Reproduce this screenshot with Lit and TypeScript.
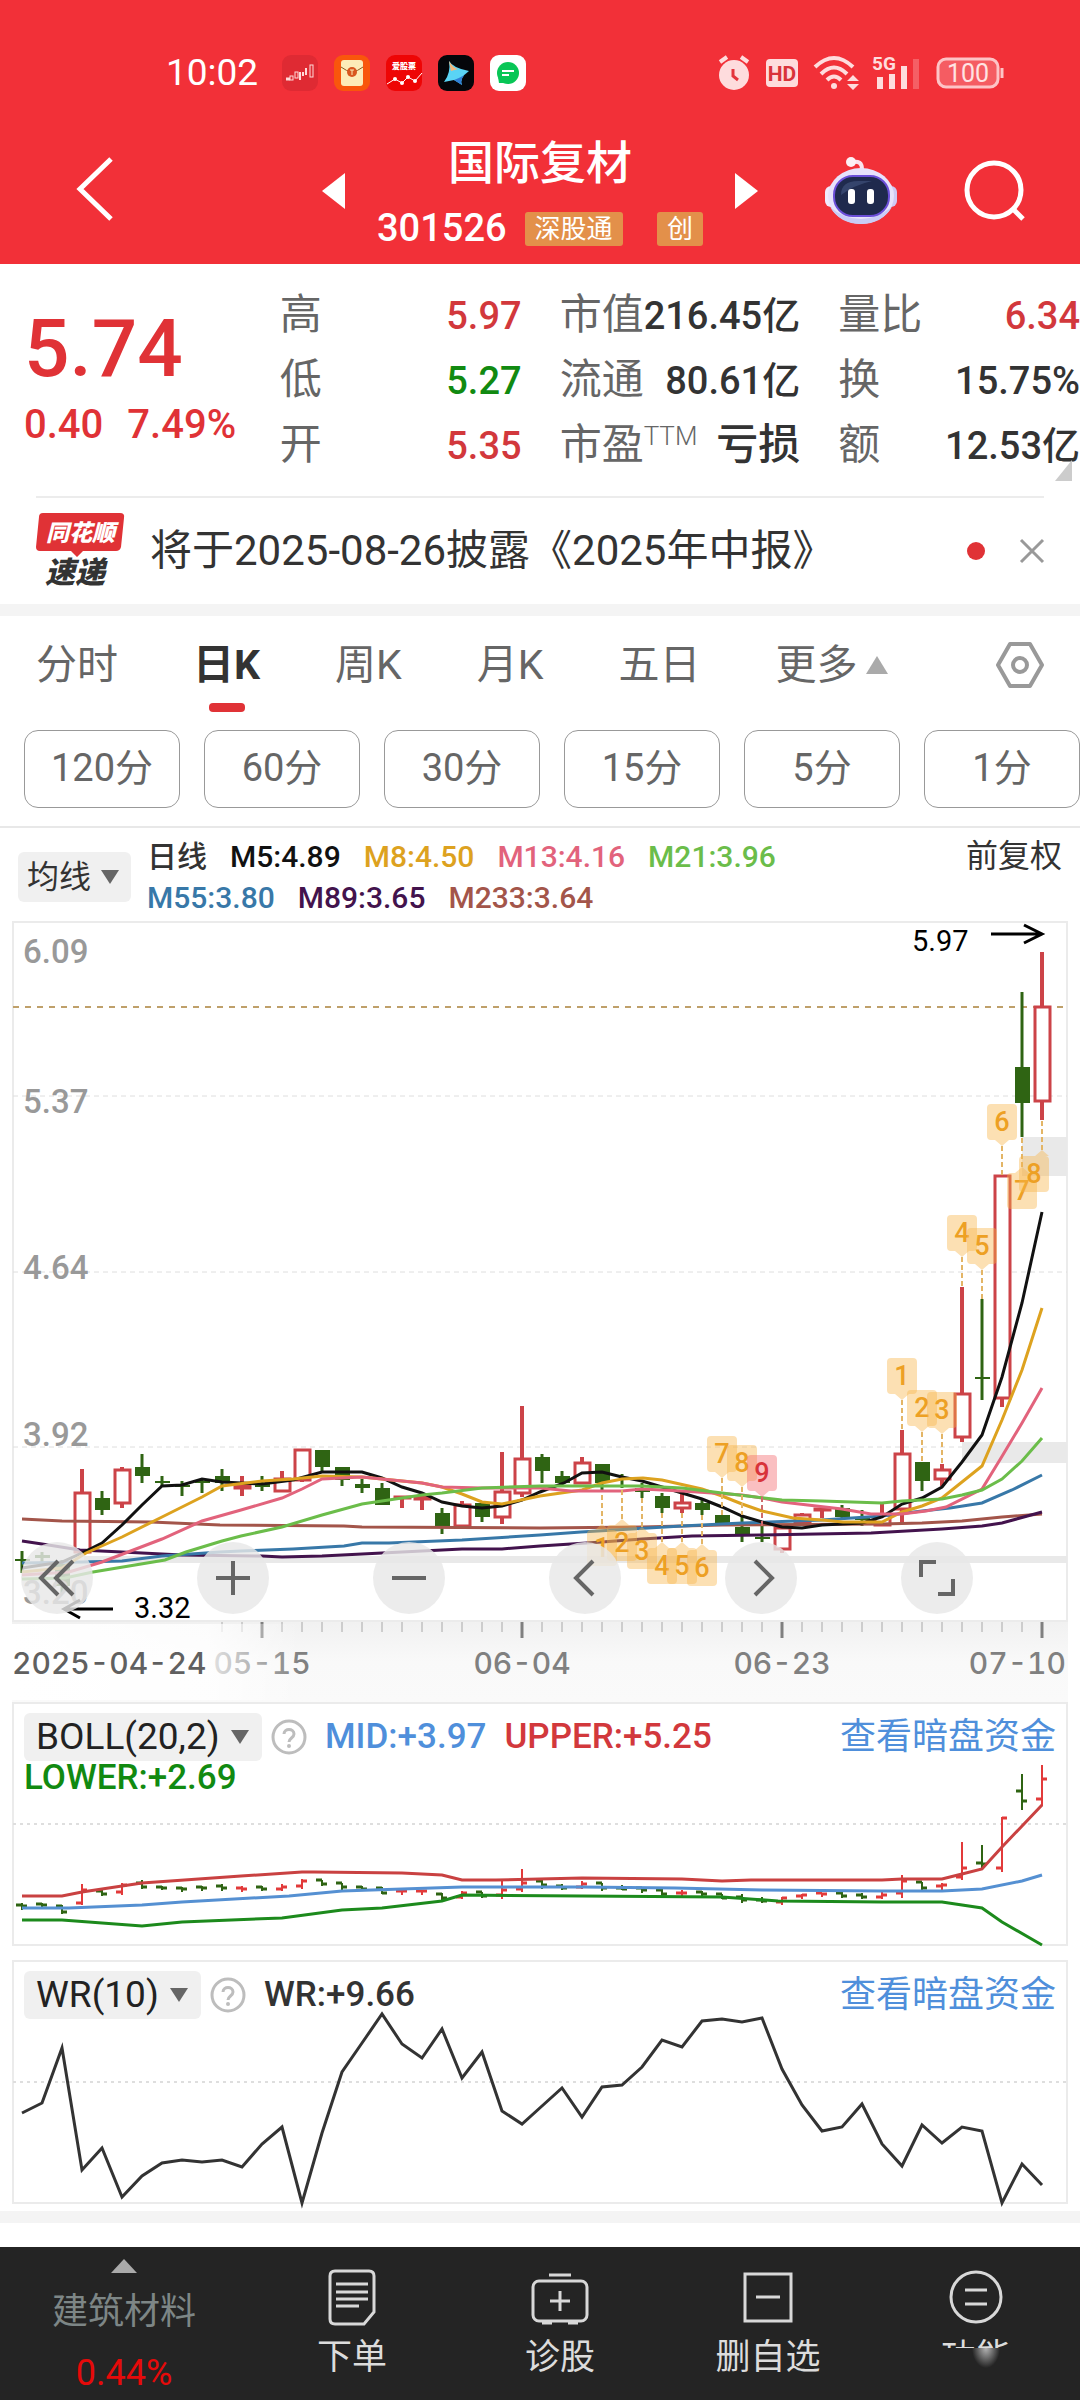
import { LitElement, html, svg, css } from "lit";
import { customElement, state } from "lit/decorators.js";

type Candle = { up: boolean; top: number; bottom: number; high: number; low: number };
type Point = [number, number];

const r = (top: number, bottom: number, high: number, low: number): Candle => ({ up: true, top, bottom, high, low });
const g = (top: number, bottom: number, high: number, low: number): Candle => ({ up: false, top, bottom, high, low });

const candles: Candle[] = [
  g(1559, 1561, 1551, 1573), g(1555, 1558, 1552, 1562), g(1564, 1586, 1560, 1593), r(1493, 1552, 1469, 1553),
  g(1498, 1510, 1491, 1515), r(1470, 1503, 1467, 1508), g(1467, 1476, 1454, 1483), g(1481, 1483, 1476, 1487),
  g(1485, 1487, 1481, 1496), g(1481, 1483, 1478, 1493), g(1476, 1483, 1469, 1491), r(1485, 1488, 1476, 1496),
  g(1483, 1487, 1476, 1491), r(1479, 1491, 1471, 1491), r(1450, 1480, 1449, 1482), g(1450, 1467, 1450, 1471),
  g(1467, 1480, 1467, 1486), g(1484, 1488, 1479, 1493), g(1488, 1505, 1483, 1505), r(1497, 1498, 1496, 1508),
  r(1497, 1499, 1495, 1510), g(1513, 1526, 1508, 1534), r(1505, 1526, 1501, 1526), g(1503, 1517, 1503, 1522),
  r(1492, 1517, 1452, 1524), r(1459, 1493, 1406, 1497), g(1457, 1471, 1454, 1483), g(1476, 1483, 1471, 1485),
  r(1463, 1483, 1457, 1483), g(1464, 1483, 1464, 1492), g(1485, 1487, 1474, 1488), g(1488, 1492, 1483, 1498),
  g(1496, 1508, 1493, 1513), r(1503, 1508, 1494, 1513), g(1503, 1510, 1498, 1515), g(1515, 1524, 1515, 1524),
  g(1527, 1536, 1515, 1542), g(1537, 1539, 1526, 1542), r(1528, 1549, 1528, 1553), r(1515, 1523, 1513, 1524),
  r(1509, 1510, 1507, 1518), g(1508, 1517, 1505, 1520), g(1518, 1520, 1510, 1526), r(1515, 1525, 1504, 1526),
  r(1454, 1509, 1430, 1523), g(1462, 1481, 1462, 1491), r(1470, 1479, 1464, 1486), r(1394, 1437, 1287, 1442),
  g(1377, 1379, 1299, 1400), r(1176, 1398, 1176, 1407), g(1067, 1103, 992, 1137), r(1007, 1101, 952, 1120),
];

const averages: { color: string; points: Point[] }[] = [
  { color: "#a3554a", points: [[22, 1519], [62, 1521], [151, 1522], [220, 1525], [344, 1526], [362, 1527], [540, 1528], [642, 1527], [722, 1525], [882, 1524], [922, 1523], [962, 1521], [1002, 1517], [1042, 1514]] },
  { color: "#43134d", points: [[22, 1541], [42, 1544], [80, 1550], [122, 1552], [182, 1555], [262, 1556], [282, 1557], [322, 1556], [382, 1553], [462, 1549], [502, 1549], [540, 1546], [602, 1542], [642, 1539], [692, 1536], [760, 1535], [871, 1533], [942, 1529], [982, 1526], [1002, 1523], [1042, 1512]] },
  { color: "#3878a8", points: [[22, 1563], [82, 1562], [122, 1561], [162, 1556], [220, 1552], [241, 1551], [293, 1549], [344, 1546], [362, 1543], [389, 1543], [462, 1540], [540, 1535], [581, 1532], [682, 1526], [742, 1523], [822, 1520], [882, 1516], [922, 1511], [950, 1508], [982, 1503], [1012, 1490], [1042, 1475]] },
  { color: "#111111", points: [[22, 1568], [62, 1562], [84, 1552], [102, 1543], [122, 1525], [142, 1505], [162, 1486], [182, 1485], [202, 1479], [222, 1482], [262, 1484], [293, 1480], [322, 1472], [362, 1472], [382, 1478], [402, 1487], [422, 1493], [442, 1502], [462, 1506], [482, 1508], [502, 1506], [522, 1500], [540, 1492], [564, 1483], [582, 1473], [602, 1472], [622, 1477], [642, 1481], [662, 1487], [682, 1493], [702, 1499], [722, 1507], [742, 1516], [762, 1522], [782, 1527], [802, 1528], [822, 1525], [862, 1523], [882, 1517], [902, 1504], [922, 1498], [942, 1487], [962, 1462], [982, 1435], [1002, 1377], [1022, 1303], [1042, 1212]] },
  { color: "#dda21f", points: [[22, 1572], [62, 1568], [86, 1553], [122, 1537], [162, 1517], [202, 1497], [222, 1486], [262, 1481], [293, 1479], [322, 1476], [362, 1477], [382, 1479], [422, 1483], [442, 1487], [462, 1494], [482, 1502], [502, 1504], [540, 1496], [582, 1490], [602, 1483], [622, 1479], [643, 1478], [662, 1480], [702, 1489], [722, 1496], [742, 1504], [762, 1511], [793, 1518], [822, 1520], [843, 1522], [882, 1522], [902, 1512], [922, 1506], [942, 1498], [962, 1482], [982, 1466], [1002, 1420], [1022, 1370], [1042, 1308]] },
  { color: "#e2637c", points: [[22, 1575], [69, 1572], [102, 1562], [162, 1539], [202, 1521], [241, 1510], [282, 1498], [302, 1489], [322, 1479], [362, 1477], [422, 1483], [442, 1487], [482, 1488], [540, 1488], [571, 1491], [622, 1491], [642, 1489], [682, 1491], [742, 1495], [762, 1498], [782, 1502], [842, 1509], [871, 1514], [902, 1514], [926, 1511], [946, 1507], [982, 1489], [1001, 1458], [1022, 1423], [1042, 1388]] },
  { color: "#6bbd4a", points: [[22, 1579], [65, 1578], [93, 1572], [165, 1560], [186, 1552], [222, 1541], [241, 1536], [282, 1527], [322, 1515], [362, 1504], [422, 1495], [442, 1493], [482, 1488], [540, 1486], [642, 1486], [682, 1488], [722, 1493], [782, 1500], [822, 1501], [882, 1503], [902, 1501], [942, 1499], [962, 1495], [982, 1490], [1002, 1479], [1022, 1461], [1042, 1438]] },
];

const bands: { color: string; points: Point[] }[] = [
  { color: "#c94141", points: [[22, 1896], [62, 1896], [82, 1892], [142, 1883], [241, 1876], [302, 1872], [314, 1872], [402, 1873], [442, 1875], [462, 1880], [496, 1880], [582, 1878], [682, 1879], [722, 1881], [751, 1880], [882, 1880], [902, 1879], [942, 1879], [962, 1874], [982, 1869], [1002, 1847], [1042, 1805]] },
  { color: "#5590d2", points: [[22, 1908], [69, 1908], [142, 1905], [182, 1902], [289, 1896], [342, 1891], [462, 1887], [582, 1887], [675, 1888], [762, 1890], [882, 1891], [942, 1891], [982, 1889], [1022, 1881], [1042, 1875]] },
  { color: "#1c8a1c", points: [[22, 1920], [62, 1920], [142, 1926], [182, 1922], [282, 1918], [342, 1910], [382, 1908], [442, 1901], [462, 1895], [582, 1896], [722, 1897], [778, 1901], [882, 1902], [942, 1902], [982, 1908], [1002, 1922], [1042, 1945]] },
];

const wr: number[] = [
  488, 458, 295, 660, 595, 740, 678, 638, 630, 637, 630, 650, 582, 532, 760, 550, 367, 280, 193, 283, 323, 237, 383,
  305, 483, 522, 468, 415, 500, 412, 405, 350, 270, 292, 213, 207, 217, 205, 358, 465, 542, 532, 463, 583, 647, 525,
  580, 532, 542, 760, 642, 705,
];

/* Sequence markers: digit, anchor x, box x, box top, end of the dotted leader, marker above the bar or below it. */
const marks: { n: number; x: number; bx: number; y: number; to: number; above: boolean; hot?: boolean }[] = [
  { n: 1, x: 602, bx: 602, y: 1530, to: 1492, above: false },
  { n: 2, x: 622, bx: 622, y: 1525, to: 1490, above: false },
  { n: 3, x: 642, bx: 642, y: 1533, to: 1498, above: false },
  { n: 4, x: 662, bx: 662, y: 1548, to: 1513, above: false },
  { n: 5, x: 682, bx: 682, y: 1548, to: 1513, above: false },
  { n: 6, x: 702, bx: 702, y: 1550, to: 1515, above: false },
  { n: 7, x: 722, bx: 722, y: 1436, to: 1515, above: true },
  { n: 8, x: 742, bx: 742, y: 1445, to: 1515, above: true },
  { n: 9, x: 762, bx: 762, y: 1455, to: 1526, above: true, hot: true },
  { n: 1, x: 902, bx: 902, y: 1358, to: 1430, above: true },
  { n: 2, x: 922, bx: 922, y: 1390, to: 1462, above: true },
  { n: 3, x: 942, bx: 942, y: 1392, to: 1464, above: true },
  { n: 4, x: 962, bx: 962, y: 1215, to: 1287, above: true },
  { n: 5, x: 982, bx: 982, y: 1228, to: 1299, above: true },
  { n: 6, x: 1002, bx: 1002, y: 1104, to: 1176, above: true },
  { n: 7, x: 1022, bx: 1022, y: 1173, to: 1137, above: false },
  { n: 8, x: 1042, bx: 1034, y: 1156, to: 1120, above: false },
];

const cx = (i: number) => 22 + 20 * i;
const poly = (pts: Point[]) => pts.map((p) => p.join(",")).join(" ");

const downTriangle = html`<svg class="tri" width="18" height="14" viewBox="0 0 18 14" aria-hidden="true"><path d="M0 0H18L9 14Z" fill="#666" /></svg>`;
const help = html`<svg width="36" height="36" viewBox="0 0 36 36" aria-hidden="true">
  <circle cx="18" cy="18" r="16" fill="none" stroke="#bdbdbd" stroke-width="3" />
  <path d="M13 15c0-6 10-6 10 0 0 4-5 4-5 8" fill="none" stroke="#bdbdbd" stroke-width="3" />
  <circle cx="18" cy="27" r="2" fill="#bdbdbd" />
</svg>`;

@customElement("app-root")
export class AppRoot extends LitElement {
  @state() private tab = "日K";

  static styles = css`
    :host {
      display: block;
      background: #fff;
      color: #333;
      font-family: Roboto, "Noto Sans CJK SC", sans-serif;
      line-height: 1.2;
      overflow-x: hidden;
    }
    * { box-sizing: border-box; }
    svg { display: block; flex: none; overflow: visible; }
    button, select {
      font: inherit;
      color: inherit;
      background: none;
      border: 0;
      padding: 0;
      margin: 0;
      appearance: none;
    }
    a { color: inherit; text-decoration: none; }
    h1 { margin: 0; }

    .top { background: #f23038; color: #fff; height: 264px; }
    .status {
      display: flex;
      align-items: center;
      height: 98px;
      padding: 48px 76px 0 166px;
      font-size: 37px;
      line-height: 50px;
    }
    .apps { display: flex; gap: 16px; margin-left: 24px; }
    .signals { display: flex; align-items: center; gap: 16px; margin-left: auto; }
    .title-bar {
      display: grid;
      grid-template-columns: 1fr auto 1fr;
      align-items: center;
      height: 166px;
      padding-top: 20px;
    }
    .back { padding-left: 76px; }
    .stock { display: flex; align-items: center; gap: 32px; }
    .names { width: 326px; }
    .names h1 { font-size: 46px; line-height: 76px; font-weight: 500; text-align: center; }
    .code { display: flex; align-items: center; height: 56px; font-size: 38px; font-weight: 500; }
    .tag {
      background: #e3904a;
      border-radius: 3px;
      font-size: 26px;
      font-weight: 400;
      line-height: 34px;
      padding: 0 10px;
      margin-left: 18px;
    }
    .tag.board { margin-left: auto; }
    .tools { display: flex; align-items: center; gap: 66px; padding-left: 66px; }

    .quote {
      position: relative;
      display: grid;
      grid-template-columns: 218fr 242fr 240fr 242fr;
      column-gap: 38px;
      padding: 18px 0 19px 24px;
      font-size: 38px;
      font-weight: 500;
      white-space: nowrap;
    }
    .price { color: #e03236; padding-top: 25px; }
    .last { font-size: 80px; line-height: 84px; }
    .change { display: flex; gap: 24px; font-size: 40px; line-height: 68px; }
    .row { display: flex; justify-content: space-between; align-items: baseline; line-height: 65px; height: 65px; }
    .name { font-size: 42px; font-weight: 400; color: #666; }
    .name sup { font-size: 26px; font-weight: 300; vertical-align: 14px; line-height: 0; }
    .loss { font-size: 42px; }
    .up { color: #d2383c; }
    .down { color: #118a11; }
    .corner { position: absolute; right: 8px; bottom: 15px; }

    .news {
      display: flex;
      align-items: center;
      height: 108px;
      margin: 0 36px;
      border-top: 2px solid #ececec;
      font-size: 42px;
      white-space: nowrap;
    }
    .news a { margin-left: 24px; }
    .dot { width: 18px; height: 18px; border-radius: 9px; background: #e03236; margin: 0 35px 0 auto; }
    .bar { height: 12px; background: #f4f4f4; }

    .tabs {
      display: flex;
      align-items: center;
      gap: 75px;
      height: 98px;
      padding: 0 36px;
      font-size: 41px;
      line-height: 98px;
      color: #666;
    }
    .tab { position: relative; height: 98px; white-space: nowrap; }
    .tab.on { color: #333; font-weight: 700; }
    .tab.on::after {
      content: "";
      position: absolute;
      left: calc(50% - 18px);
      bottom: 2px;
      width: 36px;
      height: 9px;
      border-radius: 4px;
      background: #e03236;
    }
    .more { display: flex; align-items: center; gap: 8px; }
    .settings { margin-left: auto; }
    .pills { display: flex; gap: 24px; padding: 16px 0 18px 24px; border-bottom: 2px solid #e8e8e8; }
    .pill {
      flex: 1;
      height: 78px;
      border: 1px solid #999;
      border-radius: 14px;
      font-size: 38px;
      color: #666;
      white-space: nowrap;
    }

    .legend { display: flex; align-items: center; padding: 8px 18px 3px; font-size: 30px; font-weight: 500; }
    .drop { display: flex; align-items: center; background: #f0f0f0; border-radius: 6px; }
    .legend .drop { gap: 9px; height: 50px; padding: 0 12px 0 9px; font-size: 32px; font-weight: 400; }
    .values { flex: 1; display: flex; flex-wrap: wrap; column-gap: 23px; line-height: 41px; margin-left: 16px; color: #333; }
    .adjust { font-size: 32px; line-height: 41px; font-weight: 400; align-self: flex-start; }
    .brk { flex-basis: 100%; height: 0; }

    .charts { display: flex; flex-direction: column; padding: 0 12px 7px; }
    .panel { display: grid; }
    .panel > * { grid-area: 1 / 1; }
    .plot { width: 100%; height: auto; }
    .panel + .panel { margin-top: 14px; }
    .controls {
      align-self: end;
      display: flex;
      justify-content: space-between;
      padding: 0 95px 8px 9px;
    }
    .round {
      width: 72px;
      height: 72px;
      border-radius: 36px;
      background: rgba(232, 232, 232, 0.82);
      display: grid;
      place-items: center;
    }
    .heading {
      align-self: start;
      display: flex;
      flex-wrap: wrap;
      align-items: center;
      padding: 11px 12px 0;
      font-size: 35px;
      font-weight: 500;
      white-space: nowrap;
    }
    .heading .drop { gap: 11px; height: 48px; padding: 0 13px 0 12px; font-size: 37px; font-weight: 400; color: #222; }
    .heading button { margin-left: 9px; }
    .heading span { margin-left: 18px; line-height: 34px; }
    .heading .lower { margin-left: 0; flex-basis: 100%; }
    .heading a { margin-left: auto; font-size: 36px; line-height: 48px; font-weight: 400; color: #4f8fdb; }

    .num { font-family: Roboto, sans-serif; font-size: 33px; font-weight: 500; fill: #999; }
    .mark { font-family: Roboto, sans-serif; font-size: 27px; font-weight: 500; text-anchor: middle; }
    .peak { font-family: Roboto, sans-serif; font-size: 29px; fill: #000; }
    .date { font-family: Inter, sans-serif; font-size: 30px; font-weight: 500; font-variant-numeric: tabular-nums; fill: #808080; }
    .logo { font-family: "Noto Sans CJK SC", sans-serif; font-weight: 900; font-style: italic; }

    .dock {
      display: grid;
      grid-template-columns: 248fr 208fr 208fr 208fr 208fr;
      margin-top: 24px;
      height: 153px;
      background: #242424;
      color: #dcdcdc;
      font-size: 35px;
      overflow: hidden;
    }
    .dock a { display: flex; flex-direction: column; align-items: center; padding-top: 20px; line-height: 57px; }
    .dock .sector { padding-top: 12px; font-size: 36px; color: #7d8686; }
    .sector span { line-height: 78px; }
    .sector em { font-style: normal; line-height: 44px; color: #e60a0a; }
    .dock .func { position: relative; }
    .smudge {
      position: absolute;
      inset: 101px 20px 0 20px;
      background: radial-gradient(ellipse 14px 20px at 94px 0, #b5b5b5, rgba(36, 36, 36, 0)), #242424;
    }
  `;

  private frame(top: number, height: number) {
    return svg`<rect x="13" y=${top + 1} width="1054" height=${height - 2} fill="none" stroke="#ebebeb" stroke-width="2" />`;
  }

  private candle(c: Candle, i: number) {
    const x = cx(i);
    if (!c.up) {
      return svg`<path d="M${x} ${c.high}V${c.low}" stroke="#2f6413" stroke-width="3" />
        <rect x=${x - 7} y=${c.top} width="15" height=${c.bottom - c.top} fill="#2f6413" />`;
    }
    return svg`<path d="M${x} ${c.high}V${c.top}M${x} ${c.bottom}V${c.low}" stroke="#cc4348" stroke-width="4" />
      <rect x=${x - 7} y=${c.top} width="15" height=${c.bottom - c.top} fill="#fff" stroke="#cc4348" stroke-width="3" />`;
  }

  private mark(m: (typeof marks)[number]) {
    const edge = m.above ? m.y + 36 : m.y;
    const tip = m.above ? edge + 6 : edge - 6;
    return svg`<path d="M${m.x} ${tip}V${m.to}" stroke=${m.hot ? "#cf6a6a" : "#e3b566"} stroke-width="2" stroke-dasharray="5 3" />
      <g fill=${m.hot ? "#f2676c" : "#f9b64a"} fill-opacity="0.42">
        <path d="M${m.bx - 15} ${m.y + 4}q0-4 4-4h22q4 0 4 4v28q0 4-4 4h-22q-4 0-4-4zM${m.x - 7} ${edge}L${m.x} ${tip}L${m.x + 7} ${edge}z" />
      </g>
      <text class="mark" x=${m.bx} y=${m.y + 27} fill=${m.hot ? "#d8343a" : "#eda024"}>${m.n}</text>`;
  }

  private mainChart() {
    return html`<svg class="plot" viewBox="12 921 1056 701" role="img" aria-label="日线">
      ${svg`
        ${this.frame(921, 701)}
        <path d="M13 1096H1067M13 1272H1067M13 1447H1067" stroke="#dedede" stroke-width="1" stroke-dasharray="5 4" />
        <g fill="#e9e9e9">
          <rect x="84" y="1556" width="983" height="7" />
          <rect x="962" y="1442" width="105" height="21" />
          <rect x="1022" y="1137" width="45" height="39" />
        </g>
        <path d="M13 1007H1067" stroke="#bfa06a" stroke-width="2" stroke-dasharray="6 6" />
        ${candles.map((c, i) => this.candle(c, i))}
        ${averages.map((a) => svg`<polyline points=${poly(a.points)} fill="none" stroke=${a.color} stroke-width="3" />`)}
        ${marks.map((m) => this.mark(m))}
        <text class="num" x="23" y="963">6.09</text>
        <text class="num" x="23" y="1113">5.37</text>
        <text class="num" x="23" y="1279">4.64</text>
        <text class="num" x="23" y="1446">3.92</text>
        <text class="num" x="23" y="1604">3.20</text>
        <text class="peak" x="912" y="951">5.97</text>
        <path d="M991 934H1042M1024 925L1042 934L1024 943" fill="none" stroke="#000" stroke-width="3" />
        <text class="peak" x="134" y="1618">3.32</text>
        <path d="M113 1609H64M80 1600L64 1609L80 1618" fill="none" stroke="#000" stroke-width="3" />
      `}
    </svg>`;
  }

  private axis() {
    const ticks = Array.from({ length: 42 }, (_, k) => 222 + 20 * k);
    return html`<svg class="plot" viewBox="12 1622 1056 80" role="img" aria-label="日期">
      ${svg`
        <defs>
          <linearGradient id="floor" x1="0" y1="0" x2="0" y2="1">
            <stop offset="0" stop-color="#f1f1f1" /><stop offset="0.5" stop-color="#f9f9f9" /><stop offset="1" stop-color="#fafafa" />
          </linearGradient>
          <linearGradient id="veil" gradientUnits="userSpaceOnUse" x1="12" y1="0" x2="300" y2="0">
            <stop offset="0" stop-color="#fff" /><stop offset="0.68" stop-color="#fff" stop-opacity="0.8" /><stop offset="1" stop-color="#fff" stop-opacity="0" />
          </linearGradient>
        </defs>
        <rect x="12" y="1622" width="1056" height="80" fill="url(#floor)" />
        ${ticks.map((x) =>
          (x - 262) % 260 === 0
            ? svg`<path d="M${x} 1622V1638" stroke="#808080" stroke-width="3" />`
            : svg`<path d="M${x} 1622V1632" stroke="#a8a8a8" stroke-width="1" />`
        )}
        <g class="date">
          <text x="262" y="1674" text-anchor="middle">05-15</text>
          <text x="522" y="1674" text-anchor="middle">06-04</text>
          <text x="782" y="1674" text-anchor="middle">06-23</text>
          <text x="1066" y="1674" text-anchor="end">07-10</text>
        </g>
        <rect x="12" y="1624" width="288" height="76" fill="url(#veil)" />
        <text class="date" x="12" y="1674"><tspan fill="#606060">2025-04-24</tspan></text>
      `}
    </svg>`;
  }

  private bollChart() {
    const y = (v: number) => Math.round(1765 + (v - 952) * 0.23);
    return html`<svg class="plot" viewBox="12 1702 1056 244" role="img" aria-label="BOLL">
      ${svg`
        ${this.frame(1702, 244)}
        <path d="M13 1824H1067" stroke="#dedede" stroke-width="2" stroke-dasharray="3 4" />
        ${candles.map((c, i) => {
          const x = cx(i);
          const [open, close] = c.up ? [c.bottom, c.top] : [c.top, c.bottom];
          return svg`<g stroke=${c.up ? "#e23a3a" : "#2f6413"} fill="none">
            <path d="M${x} ${y(c.high)}V${y(c.low) + 2}" stroke-width="2" />
            <path d="M${x - 6} ${y(open)}H${x}M${x} ${y(close) + 1}H${x + 5}" stroke-width="3" />
          </g>`;
        })}
        ${bands.map((b) => svg`<polyline points=${poly(b.points)} fill="none" stroke=${b.color} stroke-width="3" />`)}
      `}
    </svg>`;
  }

  private wrChart() {
    const pts = wr.map((v, i): Point => [cx(i), Math.round(1950 + v / 3)]);
    return html`<svg class="plot" viewBox="12 1960 1056 244" role="img" aria-label="WR">
      ${svg`
        ${this.frame(1960, 244)}
        <path d="M13 2082H1067" stroke="#dedede" stroke-width="2" stroke-dasharray="3 4" />
        <polyline points=${poly(pts)} fill="none" stroke="#333" stroke-width="3" />
      `}
    </svg>`;
  }

  private statusBar() {
    return html`<div class="status">
      <span>10:02</span>
      <div class="apps">
        <svg width="36" height="36" viewBox="0 0 36 36"><rect width="36" height="36" rx="9" fill="#df2a33" />
          <g fill="none" stroke="#ffd9d9" stroke-width="1"><rect x="8" y="21" width="3" height="4" /><rect x="13" y="17" width="3" height="6" /><path d="M18 17v8M21 17v4M24 13v7" stroke-width="2" /><rect x="28" y="10" width="3" height="12" /><path d="M4 24h4" stroke-width="3" /></g></svg>
        <svg width="36" height="36" viewBox="0 0 36 36"><rect width="36" height="36" rx="9" fill="#f9560c" /><rect x="7" y="5" width="22" height="26" rx="3" fill="#fdebb8" />
          <path d="M7 12q11 9 22 0" fill="none" stroke="#8b5a22" stroke-width="1" /><circle cx="18" cy="17" r="5" fill="#d9561e" /><path d="M16 15h4M18 15v5" stroke="#fdebb8" stroke-width="1" /></svg>
        <svg width="36" height="36" viewBox="0 0 36 36"><rect width="36" height="36" rx="9" fill="#ee0505" />
          <text x="18" y="14" font-size="8" font-weight="900" fill="#fff" text-anchor="middle">爱股票</text>
          <path d="M1 29L9 24L16 28L22 22L29 26L36 18" fill="none" stroke="#fff" stroke-width="1" /><g fill="#fff"><circle cx="9" cy="24" r="2" /><circle cx="16" cy="28" r="2" /><circle cx="22" cy="22" r="2" /><circle cx="29" cy="26" r="2" /></g></svg>
        <svg width="36" height="36" viewBox="0 0 36 36"><rect width="36" height="36" rx="9" fill="#05060a" />
          <path d="M11 6Q15 13 31 16Q21 23 24 30L16 25L6 27Q13 18 11 6Z" fill="#5ad4f5" /><path d="M11 6Q15 13 20 14L13 16Z" fill="#f4b67a" /><path d="M31 16Q21 23 24 30L16 25Q25 22 31 16Z" fill="#2f7fd6" /></svg>
        <svg width="36" height="36" viewBox="0 0 36 36"><rect width="36" height="36" rx="9" fill="#fff" /><circle cx="18" cy="18" r="11" fill="#08c656" /><path d="M8 22L9 28L16 28Z" fill="#08c656" />
          <path d="M12 16h12M12 20h7" stroke="#fff" stroke-width="2" /></svg>
      </div>
      <div class="signals">
        <svg width="32" height="36" viewBox="0 0 32 36"><circle cx="16" cy="20" r="15" fill="#fedcdd" /><path d="M2 7L9 2M30 7L23 2" stroke="#fedcdd" stroke-width="4" /><path d="M15 14v7l5 4" fill="none" stroke="#e4353d" stroke-width="3" /></svg>
        <svg width="32" height="28" viewBox="0 0 32 28"><rect width="32" height="28" rx="4" fill="#fedcdd" /><text x="16" y="22" font-size="21" font-weight="700" fill="#d9333b" text-anchor="middle">HD</text></svg>
        <svg width="44" height="36" viewBox="0 0 44 36" fill="none" stroke="#fedcdd" stroke-width="4"><path d="M1 12Q20 -6 39 12M7 19Q20 6 33 19M13 25Q20 18 27 25" /><circle cx="20" cy="31" r="3" fill="#fedcdd" stroke="none" /><path d="M33 26L39 20L45 26ZM33 29L39 35L45 29Z" fill="#fedcdd" stroke="none" /></svg>
        <svg width="46" height="36" viewBox="0 0 46 36"><text x="-2" y="15" font-size="19" font-weight="700" fill="#fedcdd">5G</text><path d="M6 22V34M18 19V34M30 11V34" stroke="#fedcdd" stroke-width="6" /><path d="M42 4V34" stroke="#f55f65" stroke-width="6" /></svg>
        <svg width="68" height="32" viewBox="0 0 68 32"><rect x="2" y="2" width="60" height="28" rx="8" fill="#f55c62" stroke="#fdc4c6" stroke-width="3" /><path d="M66 11V21" stroke="#fdc4c6" stroke-width="3" /><text x="32" y="25" font-size="25" fill="#ffe3e3" text-anchor="middle">100</text></svg>
      </div>
    </div>`;
  }

  private cell(name: unknown, value: string, tone = "") {
    return html`<div class="row"><span class="name">${name}</span><span class=${tone}>${value}</span></div>`;
  }

  render() {
    const icon = (d: string) => svg`<path d=${d} fill="none" stroke="#666" stroke-width="4" />`;
    return html`
      <header class="top">
        ${this.statusBar()}
        <div class="title-bar">
          <div class="back">
            <button aria-label="返回"><svg width="38" height="64" viewBox="0 0 38 64"><path d="M35 2L4 32L35 62" fill="none" stroke="#fff" stroke-width="5" /></svg></button>
          </div>
          <div class="stock">
            <button aria-label="上一只"><svg width="23" height="36" viewBox="0 0 23 36"><path d="M23 0V36L0 18Z" fill="#fff" /></svg></button>
            <div class="names">
              <h1>国际复材</h1>
              <div class="code">301526<span class="tag">深股通</span><span class="tag board">创</span></div>
            </div>
            <button aria-label="下一只"><svg width="23" height="36" viewBox="0 0 23 36"><path d="M0 0V36L23 18Z" fill="#fff" /></svg></button>
          </div>
          <div class="tools">
            <button aria-label="助手"><svg width="74" height="68" viewBox="0 0 74 68">
              <path d="M28 5Q38 3 38 12" fill="none" stroke="#fbe3ee" stroke-width="4" /><circle cx="27" cy="5" r="5" fill="#fdf0f5" />
              <rect x="1" y="29" width="14" height="21" rx="6" fill="#f1eafc" /><rect x="59" y="29" width="14" height="21" rx="6" fill="#cfc9f4" />
              <ellipse cx="37" cy="39" rx="33" ry="28" fill="#e7e2fb" /><path d="M6 50Q16 67 37 67Q58 67 68 50Q52 62 37 62Q20 62 6 50Z" fill="#c9ccf6" />
              <rect x="10" y="19" width="55" height="40" rx="19" fill="#1f2a4d" stroke="#6b4fd8" stroke-width="2" />
              <path d="M17 38Q17 24 34 24H48Q30 28 17 38Z" fill="#35446c" />
              <rect x="24" y="32" width="7" height="15" rx="3" fill="#fff" /><rect x="43" y="32" width="7" height="15" rx="3" fill="#fff" />
            </svg></button>
            <button aria-label="搜索"><svg width="62" height="62" viewBox="0 0 62 62"><circle cx="30" cy="30" r="27" fill="none" stroke="#fff" stroke-width="5" /><path d="M48 48L59 59" stroke="#fff" stroke-width="5" /></svg></button>
          </div>
        </div>
      </header>

      <section class="quote">
        <div class="price">
          <div class="last">5.74</div>
          <div class="change"><span>0.40</span><span>7.49%</span></div>
        </div>
        <div>${this.cell("高", "5.97", "up")}${this.cell("低", "5.27", "down")}${this.cell("开", "5.35", "up")}</div>
        <div>${this.cell("市值", "216.45亿")}${this.cell("流通", "80.61亿")}${this.cell(html`市盈<sup>TTM</sup>`, "亏损", "loss")}</div>
        <div>${this.cell("量比", "6.34", "up")}${this.cell("换", "15.75%")}${this.cell("额", "12.53亿")}</div>
        <svg class="corner" width="17" height="21" viewBox="0 0 17 21"><path d="M17 0V21H0Z" fill="#ccc" /></svg>
      </section>

      <section class="news">
        <svg width="90" height="76" viewBox="0 0 90 76">
          <path d="M7 0H84Q89 0 88 5L85 34Q84 38 80 38H47L41 44L35 38H4Q0 38 0 34L3 4Q3 0 7 0Z" fill="#e03236" />
          <text class="logo" x="10" y="28" font-size="23" fill="#fff">同花顺</text>
          <text class="logo" x="9" y="70" font-size="30" fill="#333">速递</text>
        </svg>
        <a href="#report">将于2025-08-26披露《2025年中报》</a>
        <span class="dot"></span>
        <button aria-label="关闭"><svg width="24" height="24" viewBox="0 0 24 24"><path d="M1 1L23 23M23 1L1 23" stroke="#999" stroke-width="3" /></svg></button>
      </section>
      <div class="bar"></div>

      <nav class="tabs">
        ${["分时", "日K", "周K", "月K", "五日"].map(
          (t) => html`<button class="tab ${t === this.tab ? "on" : ""}" @click=${() => (this.tab = t)}>${t}</button>`
        )}
        <button class="tab more">更多<svg width="22" height="18" viewBox="0 0 22 18"><path d="M11 0L22 18H0Z" fill="#aaa" /></svg></button>
        <button class="settings" aria-label="设置"><svg width="48" height="46" viewBox="0 0 48 46" fill="none" stroke="#999" stroke-width="4"><path d="M14 2H34L46 23L34 44H14L2 23Z" stroke-linejoin="round" /><circle cx="24" cy="23" r="7" /></svg></button>
      </nav>
      <div class="pills">${["120分", "60分", "30分", "15分", "5分", "1分"].map((p) => html`<button class="pill">${p}</button>`)}</div>

      <div class="legend">
        <label class="drop"><select aria-label="指标"><option>均线</option></select>${downTriangle}</label>
        <div class="values">
          <span>日线</span><span style="color:#111">M5:4.89</span><span style="color:#dda21f">M8:4.50</span><span style="color:#e2637c">M13:4.16</span><span style="color:#6bbd4a">M21:3.96</span>
          <i class="brk"></i>
          <span style="color:#3878a8">M55:3.80</span><span style="color:#43134d">M89:3.65</span><span style="color:#a3554a">M233:3.64</span>
        </div>
        <span class="adjust">前复权</span>
      </div>

      <main class="charts">
        <div class="panel">
          ${this.mainChart()}
          <div class="controls">
            <button class="round" aria-label="最早"><svg width="36" height="36" viewBox="0 0 36 36">${icon("M19 1L2 18L19 35M34 1L17 18L34 35")}</svg></button>
            <button class="round" aria-label="放大"><svg width="34" height="34" viewBox="0 0 34 34">${icon("M0 17H34M17 0V34")}</svg></button>
            <button class="round" aria-label="缩小"><svg width="34" height="34" viewBox="0 0 34 34">${icon("M0 17H34")}</svg></button>
            <button class="round" aria-label="左移"><svg width="24" height="36" viewBox="0 0 24 36">${icon("M20 1L3 18L20 35")}</svg></button>
            <button class="round" aria-label="右移"><svg width="24" height="36" viewBox="0 0 24 36">${icon("M6 1L23 18L6 35")}</svg></button>
            <button class="round" aria-label="全屏"><svg width="38" height="38" viewBox="0 0 38 38">${icon("M3 18V3H18M35 20V35H20")}</svg></button>
          </div>
        </div>
        ${this.axis()}
        <div class="panel">
          ${this.bollChart()}
          <div class="heading">
            <label class="drop"><select aria-label="副图一"><option>BOLL(20,2)</option></select>${downTriangle}</label>
            <button aria-label="说明">${help}</button>
            <span style="color:#4f8fdb">MID:+3.97</span>
            <span style="color:#d2383c">UPPER:+5.25</span>
            <a href="#funds">查看暗盘资金</a>
            <span class="lower" style="color:#118a11">LOWER:+2.69</span>
          </div>
        </div>
        <div class="panel">
          ${this.wrChart()}
          <div class="heading">
            <label class="drop"><select aria-label="副图二"><option>WR(10)</option></select>${downTriangle}</label>
            <button aria-label="说明">${help}</button>
            <span>WR:+9.66</span>
            <a href="#funds">查看暗盘资金</a>
          </div>
        </div>
      </main>
      <div class="bar"></div>

      <nav class="dock">
        <a class="sector" href="#sector">
          <svg width="26" height="14" viewBox="0 0 26 14"><path d="M13 0L26 14H0Z" fill="#aaa" /></svg>
          <span>建筑材料</span><em>0.44%</em>
        </a>
        <a href="#order">
          <svg width="60" height="62" viewBox="0 0 60 62" fill="none" stroke="#d8d8d8" stroke-width="3"><path d="M13 4H47Q52 4 52 9V45L42 57H13Q8 57 8 52V9Q8 4 13 4ZM14 17H46M14 25H46M14 32H46M14 39H37" /></svg>下单
        </a>
        <a href="#diagnose">
          <svg width="60" height="62" viewBox="0 0 60 62" fill="none" stroke="#d8d8d8" stroke-width="3"><rect x="3" y="14" width="54" height="40" rx="6" /><path d="M19 8H41M30 24V44M20 34H40M12 56H22M38 56H48" /></svg>诊股
        </a>
        <a href="#remove">
          <svg width="60" height="62" viewBox="0 0 60 62" fill="none" stroke="#d8d8d8" stroke-width="3"><rect x="7" y="7" width="46" height="47" /><path d="M18 30H42" /></svg>删自选
        </a>
        <a class="func" href="#functions">
          <svg width="60" height="62" viewBox="0 0 60 62" fill="none" stroke="#d8d8d8" stroke-width="3"><circle cx="30" cy="30" r="25" /><path d="M19 23H41M19 37H41" /></svg>功能
          <i class="smudge"></i>
        </a>
      </nav>
    `;
  }
}
